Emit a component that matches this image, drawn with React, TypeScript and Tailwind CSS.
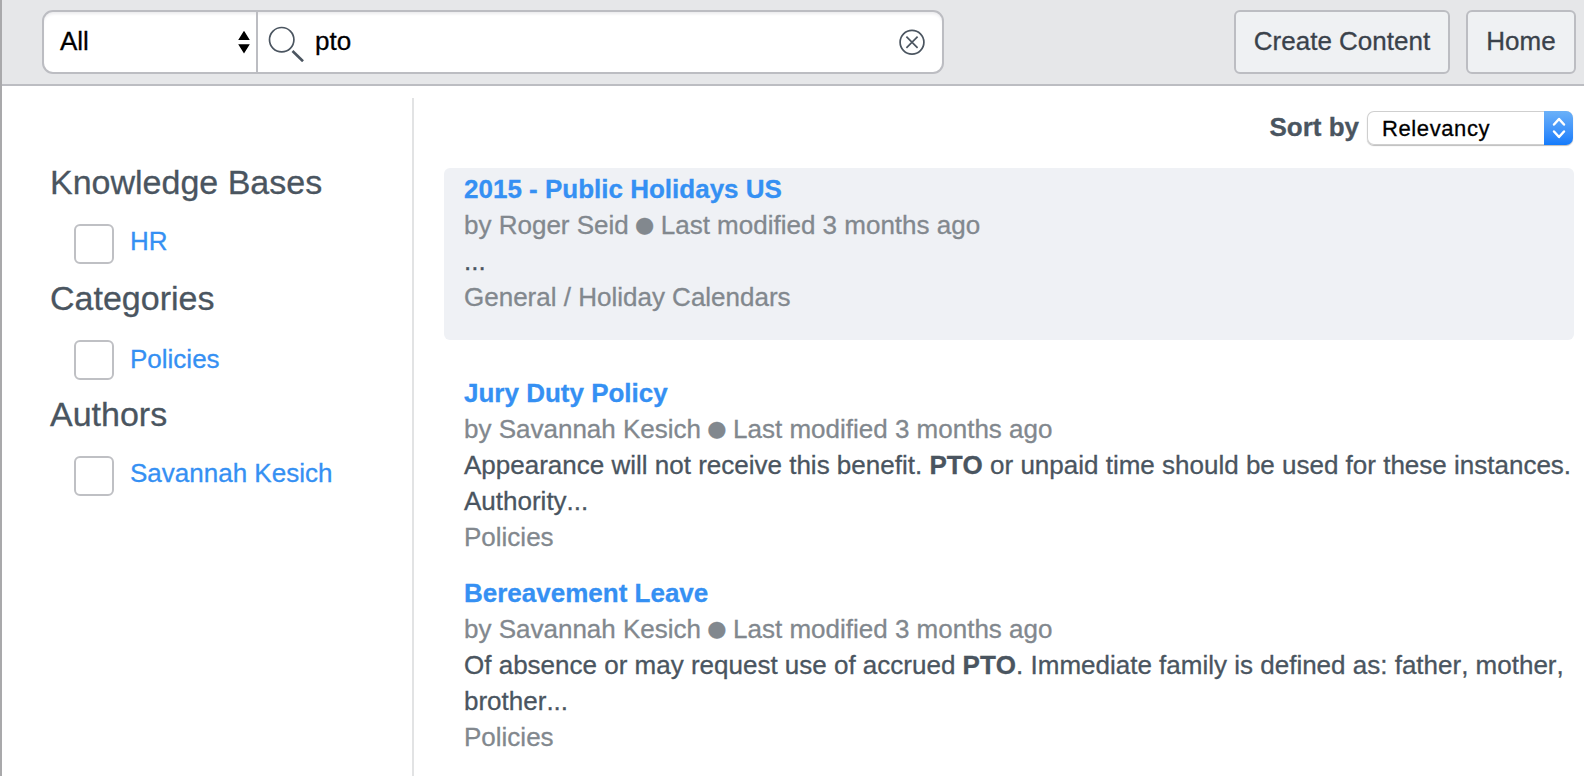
import React from "react";

type Result = {
  title: string;
  author: string;
  excerpt: React.ReactNode;
  category: string;
  active?: boolean;
};

const results: Result[] = [
  {
    title: "2015 - Public Holidays US",
    author: "Roger Seid",
    excerpt: "...",
    category: "General / Holiday Calendars",
    active: true,
  },
  {
    title: "Jury Duty Policy",
    author: "Savannah Kesich",
    excerpt: (
      <>
        Appearance will not receive this benefit. <b>PTO</b> or unpaid time should be used for these instances.
        <br />
        Authority...
      </>
    ),
    category: "Policies",
  },
  {
    title: "Bereavement Leave",
    author: "Savannah Kesich",
    excerpt: (
      <>
        Of absence or may request use of accrued <b>PTO</b>. Immediate family is defined as: father, mother,
        <br />
        brother...
      </>
    ),
    category: "Policies",
  },
];

const facets = [
  { heading: "Knowledge Bases", option: "HR", labelOffset: "-mt-px" },
  { heading: "Categories", option: "Policies", labelOffset: "mt-px" },
  { heading: "Authors", option: "Savannah Kesich", labelOffset: "-mt-px" },
];

function SearchBar() {
  return (
    <div className="flex h-16 w-[902px] overflow-hidden rounded-[11px] border-2 border-[#bcbdc2] bg-white shadow-[inset_0_3px_3px_-1px_#ececee]">
      <button className="flex w-[214px] items-center justify-between border-r-2 border-[#bcbdc2] pr-1.5 pl-4 text-black">
        <span className="pb-[2px]">All</span>
        <svg className="h-6 w-3" viewBox="0 0 12 24" fill="#000">
          <path d="M0.200 10L6 0.800l5.800 9.200zM0.200 14.200h11.600L6 23.400z" />
        </svg>
      </button>
      <div className="flex flex-1 items-center pr-[17px] pl-2.5">
        <svg className="h-10 w-10" viewBox="0 0 40 40" fill="none" stroke="#4b5560">
          <circle cx="13.700" cy="17.700" r="12.200" strokeWidth="1.700" />
          <path d="M24.500 29L35 39.300" strokeWidth="2.600" />
        </svg>
        <span className="flex-1 pb-[2px] pl-[7px] text-black">pto</span>
        <svg className="h-[26px] w-[26px]" viewBox="0 0 26 26" fill="none" stroke="#4b5560" strokeWidth="1.700">
          <circle cx="13" cy="13.200" r="11.900" />
          <path d="M7.400 7.600l11.200 11.200M18.600 7.600L7.400 18.800" />
        </svg>
      </div>
    </div>
  );
}

function HeaderButton({ width, children }: { width: string; children: React.ReactNode }) {
  return (
    <button className={`h-16 rounded-md border-2 border-[#bcbdc2] bg-[#eff1f3] pb-[2px] text-[#3a424b] ${width}`}>
      {children}
    </button>
  );
}

function ResultItem({ result }: { result: Result }) {
  return (
    <article
      className={
        result.active
          ? "mb-[35px] h-[172px] rounded-md bg-[#eff1f5] pt-[3px] pl-5"
          : "mb-5 pl-5"
      }
    >
      <h3 className="font-bold text-[#3590f3]">{result.title}</h3>
      <p className="h-9 text-[#82888e]">
        by {result.author}{" "}
        <span className="-ml-px mr-px inline-block w-[17.500px] align-[2px] font-['DejaVu_Sans'] text-[22px] leading-none">●</span>{" "}
        Last modified 3 months ago
      </p>
      <p className="[font-kerning:none]">{result.excerpt}</p>
      <p className="text-[#82888e]">{result.category}</p>
    </article>
  );
}

export default function App() {
  return (
    <div className="flex h-[776px] flex-col overflow-hidden border-l-2 border-[#a9a9ab] bg-white font-['Liberation_Sans',Arial,sans-serif] text-[26px] leading-9 whitespace-nowrap text-[#4a5560] [-webkit-text-stroke:0.3px]">
      <header className="flex h-[86px] shrink-0 items-start justify-between border-b-2 border-[#bcbdc2] bg-[#e6e7e9] pt-2.5 pr-2 pl-10">
        <SearchBar />
        <nav className="flex gap-4">
          <HeaderButton width="w-[216px]">Create Content</HeaderButton>
          <HeaderButton width="w-[110px]">Home</HeaderButton>
        </nav>
      </header>
      <div className="flex flex-1 pt-3">
        <aside className="w-[412px] shrink-0 border-r-2 border-[#e2e3e4] pt-[64px] pl-12">
          {facets.map((facet) => (
            <section key={facet.heading} className="h-[116px]">
              <h2 className="h-[62px] text-[34px] leading-10">{facet.heading}</h2>
              <label className="flex gap-4 pl-6 text-[#3590f3]">
                <span className="h-10 w-10 rounded-md border-2 border-[#bfc0c4] bg-white" />
                <span className={facet.labelOffset}>{facet.option}</span>
              </label>
            </section>
          ))}
        </aside>
        <main className="flex-1 pr-2.5 pl-[30px]">
          <div className="flex h-[70px] items-start justify-end pt-[11px] pr-px">
            <span className="mr-2 font-bold">Sort by</span>
            <button className="mt-[2px] flex h-[34px] w-[206px] overflow-hidden rounded-[7px] bg-white text-[22px] leading-[34px] tracking-[0.6px] text-black shadow-[inset_0_0_0_1px_#cfcfcf,0_1px_1px_#bdbdbd]">
              <span className="flex-1 pt-px pl-[15px] text-left">Relevancy</span>
              <span className="flex h-full w-[29px] items-center justify-center bg-linear-to-b from-[#6bb1f8] to-[#127bfb]">
                <svg className="h-[22px] w-[14px]" viewBox="0 0 14 22" fill="none" stroke="#fff" strokeWidth="2.500" strokeLinecap="round" strokeLinejoin="round">
                  <path d="M2 7.500L7 2l5 5.500M2 14.500L7 20l5-5.500" />
                </svg>
              </span>
            </button>
          </div>
          {results.map((result) => (
            <ResultItem key={result.title} result={result} />
          ))}
        </main>
      </div>
    </div>
  );
}
